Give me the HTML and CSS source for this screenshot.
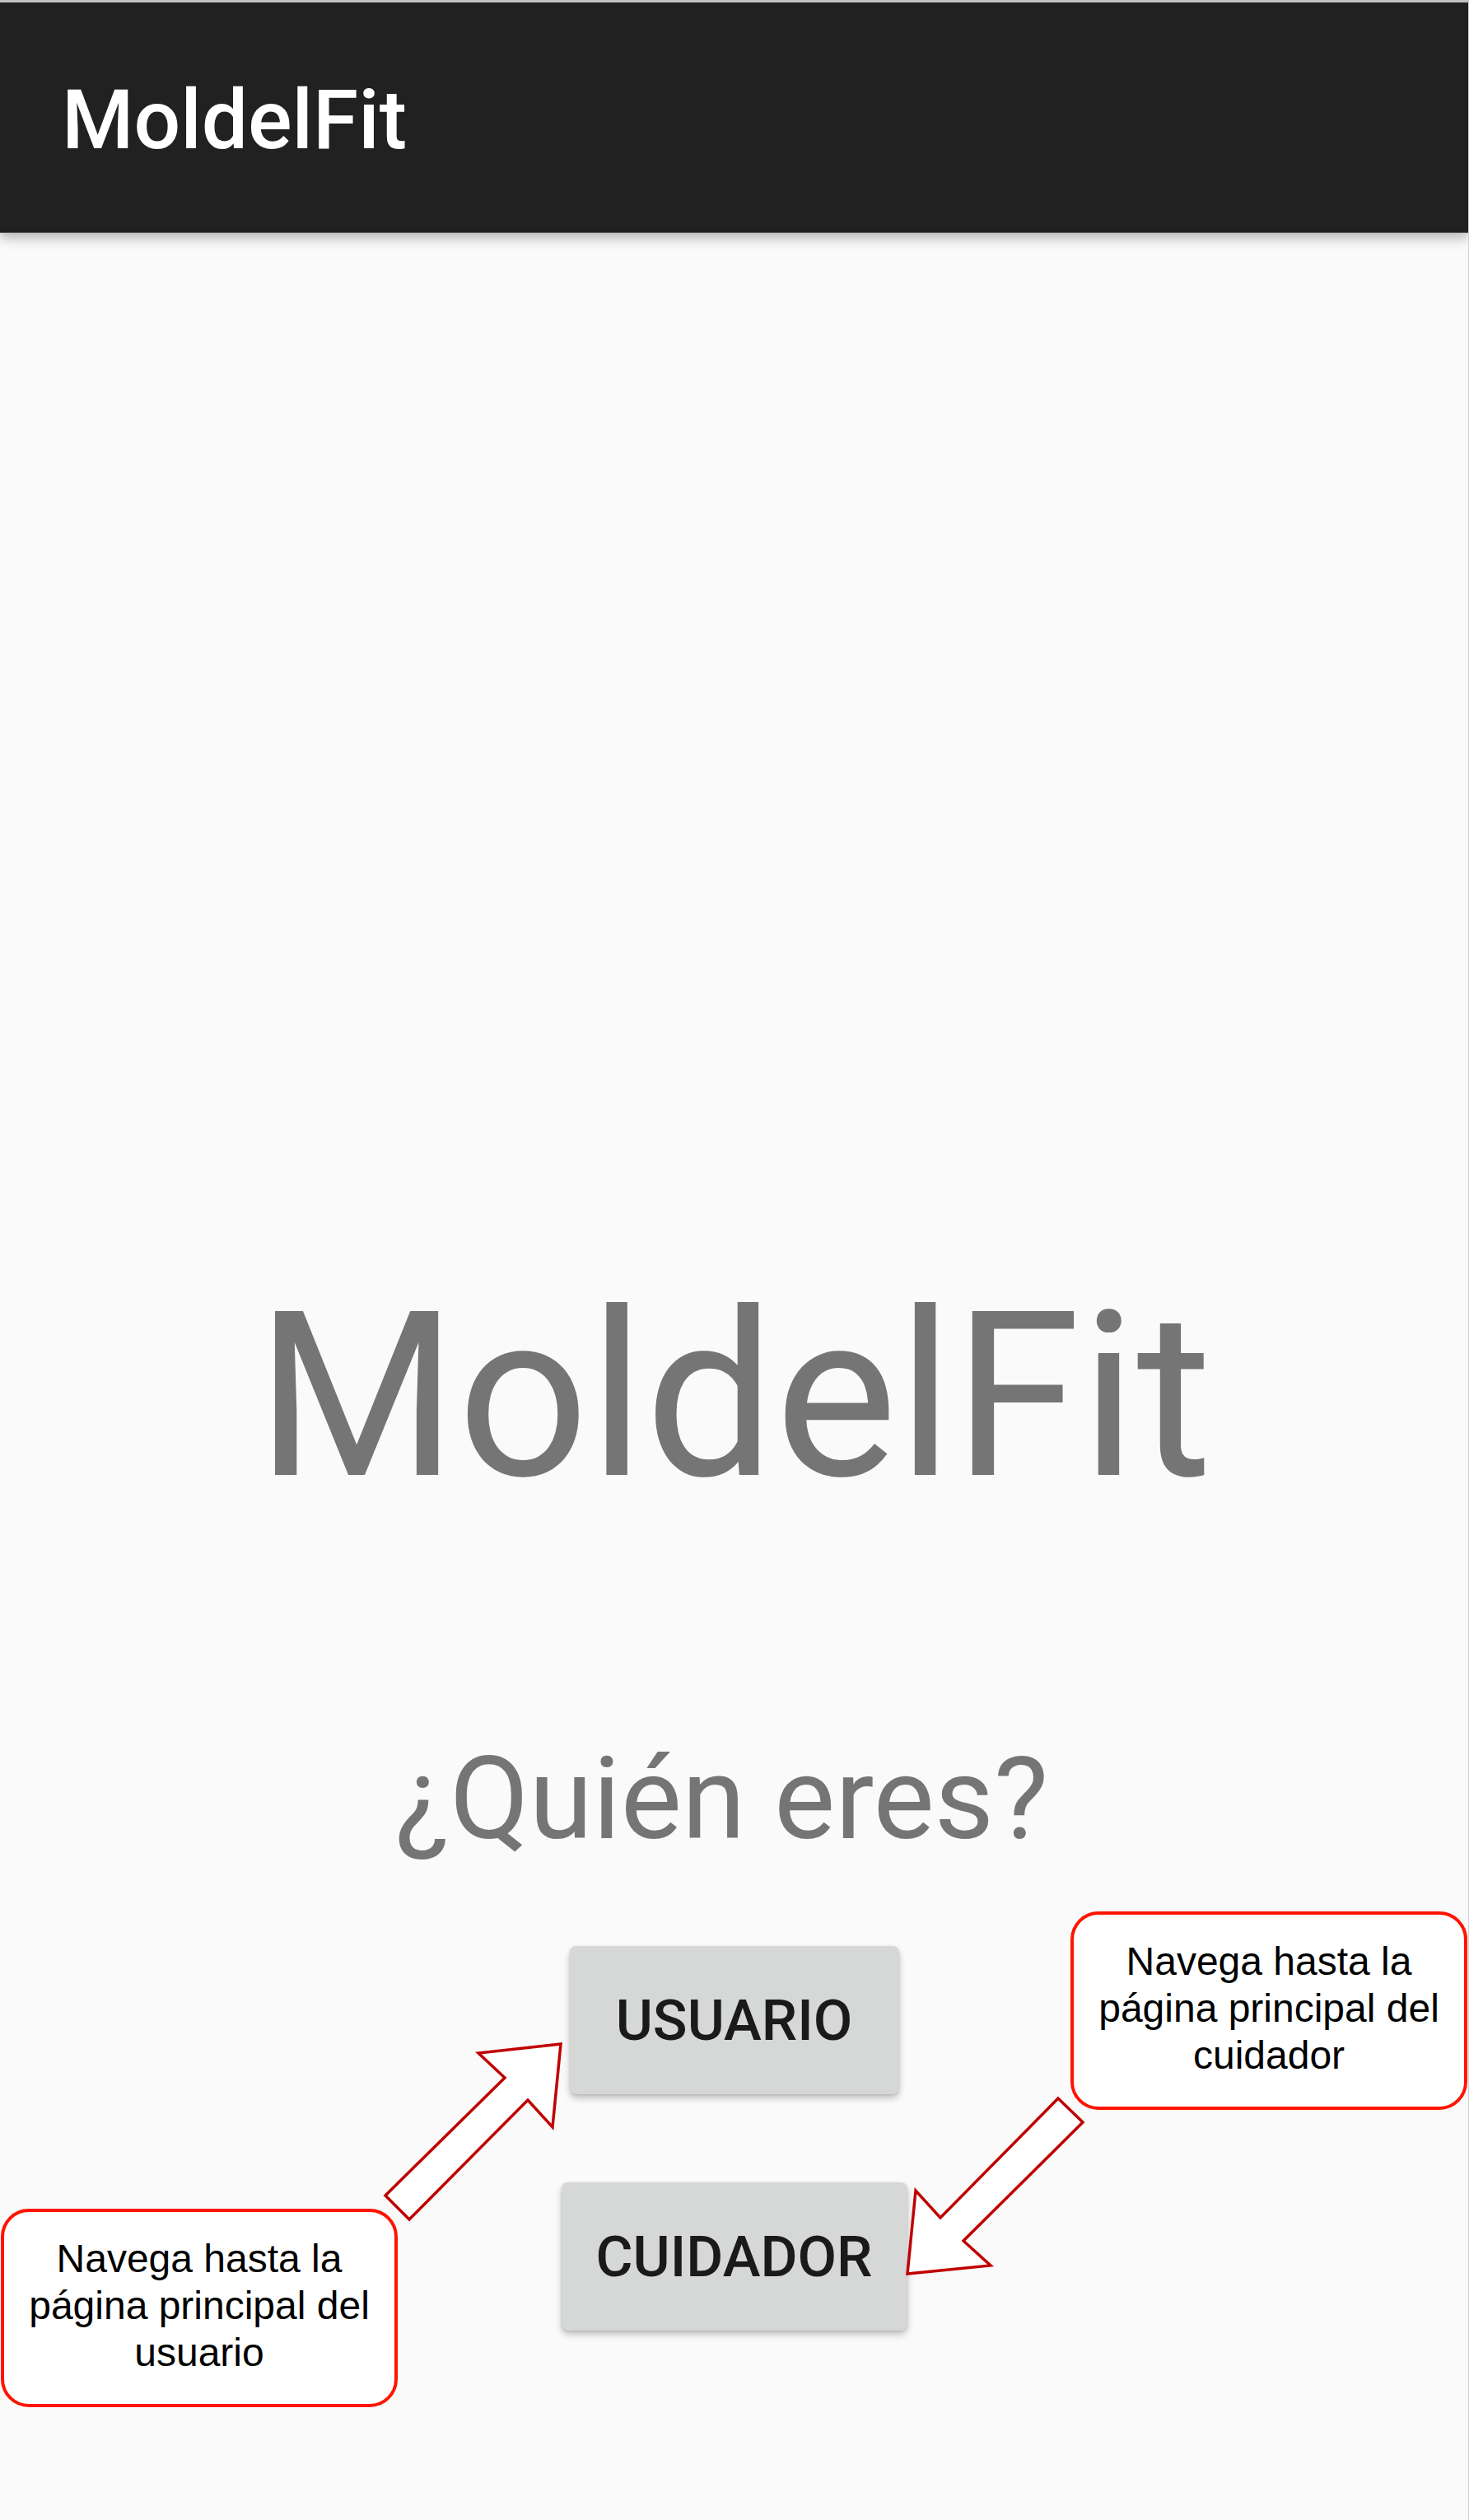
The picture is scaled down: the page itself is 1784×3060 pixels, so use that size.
FILE: index.html
```html
<!DOCTYPE html>
<html lang="es">
<head>
<meta charset="utf-8">
<title>MoldelFit</title>
<link rel="stylesheet" href="styles.css">
</head>
<body>
<div class="screen">
  <header class="appbar">
    <h1 class="appbar-title">MoldelFit</h1>
  </header>
  <main class="content">
    <div class="logo">MoldelFit</div>
    <div class="question">¿Quién eres?</div>
    <div class="actions">
      <button class="btn btn-user">USUARIO</button>
      <button class="btn btn-carer">CUIDADOR</button>
    </div>
  </main>

  <div class="callout callout-carer">Navega hasta la<br>página principal del<br>cuidador</div>
  <div class="callout callout-user">Navega hasta la<br>página principal del<br>usuario</div>

  <svg class="arrow arrow-up" width="230" height="230" viewBox="0 0 230 230">
    <polygon points="8,191 153,48 121,18 221,7 211,108 181,75 37,220" />
  </svg>
  <svg class="arrow arrow-down" width="230" height="230" viewBox="0 0 230 230">
    <polygon points="190,8 220,37 75,181 108,211 7,221 17,120 47,153" />
  </svg>
</div>
</body>
</html>
```

FILE: styles.css
```css
* { box-sizing: border-box; }

html, body {
  margin: 0;
  padding: 0;
  background: #fafafa;
}

.screen {
  position: relative;
  width: 1784px;
  height: 3060px;
  background: #fafafa;
  border-top: 3px solid #c2c2c2;
  border-right: 1px solid #d0d0d0;
  overflow: hidden;
  font-family: Roboto, "Noto Sans", sans-serif;
}

.appbar {
  height: 280px;
  background: #212121;
  border-bottom: 1px solid #5c5c5c;
  box-shadow: 0 6px 14px rgba(0, 0, 0, 0.28);
  padding: 93px 0 0 75px;
  position: relative;
  z-index: 1;
}

.appbar-title {
  margin: 0;
  color: #ffffff;
  font-family: Roboto, sans-serif;
  font-weight: 500;
  font-size: 100px;
  line-height: 1;
  letter-spacing: 0;
}

.content {
  display: flex;
  flex-direction: column;
  align-items: center;
  padding-top: 1272px;
}

.logo {
  color: #757575;
  font-size: 280px;
  line-height: 1;
  font-weight: 400;
}

.question {
  margin-top: 279px;
  color: #757575;
  font-size: 140px;
  line-height: 1;
  font-weight: 400;
  padding-right: 30px;
}

.actions {
  margin-top: 109px;
  display: flex;
  flex-direction: column;
  align-items: center;
  gap: 107px;
}

.btn {
  height: 180px;
  border: none;
  border-radius: 8px;
  background: #d6d7d7;
  color: #1a1a1a;
  font-family: Roboto, sans-serif;
  font-weight: 500;
  font-size: 69px;
  padding: 0;
  box-shadow: 0 5px 8px rgba(0, 0, 0, 0.22), 0 1px 3px rgba(0, 0, 0, 0.12);
}

.btn-user { width: 400px; }
.btn-carer { width: 420px; }

.callout {
  position: absolute;
  width: 482px;
  height: 241px;
  background: #ffffff;
  border: 4px solid #ff1400;
  border-radius: 34px;
  display: flex;
  align-items: center;
  justify-content: center;
  text-align: center;
  font-family: "Liberation Sans", Arial, sans-serif;
  font-size: 48px;
  line-height: 57px;
  color: #000000;
  padding-bottom: 6px;
}

.callout-carer { left: 1300px; top: 2318px; }
.callout-user { left: 1px; top: 2679px; }

.arrow {
  position: absolute;
  overflow: visible;
}

.arrow polygon {
  fill: #ffffff;
  stroke: #c00000;
  stroke-width: 3.5;
  stroke-linejoin: miter;
}

.arrow-up { left: 460px; top: 2472px; }
.arrow-down { left: 1095px; top: 2537px; }
```
